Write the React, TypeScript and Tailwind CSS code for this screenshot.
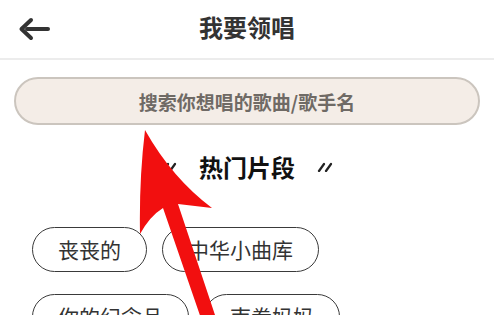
import React from "react";

const font = { fontFamily: '"Noto Sans CJK SC", "Noto Sans", sans-serif' };

function Tag({ label }: { label: string }) {
  return (
    <div className="h-[45px] px-[25px] rounded-full border-[1.5px] border-[#3a3a3a] flex items-center justify-center text-[21px] text-[#333333] leading-none">
      {label}
    </div>
  );
}

function Marks() {
  return (
    <svg width="16" height="10" viewBox="0 0 16 10" className="shrink-0">
      <path d="M2 9 L7 2" stroke="#222" strokeWidth="2.2" strokeLinecap="round" />
      <path d="M9 9 L14 2" stroke="#222" strokeWidth="2.2" strokeLinecap="round" />
    </svg>
  );
}

export default function App() {
  return (
    <div className="relative w-[494px] h-[315px] overflow-hidden bg-white" style={font}>
      <div className="h-[60px] border-b-[2px] border-[#ececec] grid grid-cols-[1fr_auto_1fr] items-center">
        <div className="pl-[18px] flex items-center">
          <svg width="34" height="26" viewBox="0 0 34 26">
            <path d="M13 4 L3.5 13 L13 22" fill="none" stroke="#333" strokeWidth="4" strokeLinecap="round" strokeLinejoin="round" />
            <path d="M9 13 L30 13" fill="none" stroke="#333" strokeWidth="4" strokeLinecap="round" />
          </svg>
        </div>
        <div className="text-[24px] font-bold text-[#333333] leading-none -mt-[4px]">我要领唱</div>
        <div />
      </div>

      <div className="mx-[14px] mt-[17px] h-[48px] rounded-full border-2 border-[#cbc5be] bg-[#f4ede7] flex items-center justify-center">
        <span className="text-[19px] font-bold text-[#6f6a65] leading-none">搜索你想唱的歌曲/歌手名</span>
      </div>

      <div className="mt-[26px] h-[32px] flex items-center justify-center gap-[22px]">
        <Marks />
        <span className="text-[24px] font-bold text-[#111111] leading-none">热门片段</span>
        <Marks />
      </div>

      <div className="mt-[44px] px-[32px] flex flex-wrap gap-x-[15px] gap-y-[22px]">
        <Tag label="丧丧的" />
        <Tag label="中华小曲库" />
        <Tag label="你的纪念品" />
        <Tag label="南拳妈妈" />
      </div>

      <svg className="absolute inset-0 pointer-events-none" width="494" height="315" viewBox="0 0 494 315">
        <path
          d="M145 130 Q 172 178 212 208 L 178 204 L 220 330 L 205 330 L 163 208 Q 150 216 140 234 Q 139 180 145 130 Z"
          fill="#f20f0f"
        />
      </svg>
    </div>
  );
}
